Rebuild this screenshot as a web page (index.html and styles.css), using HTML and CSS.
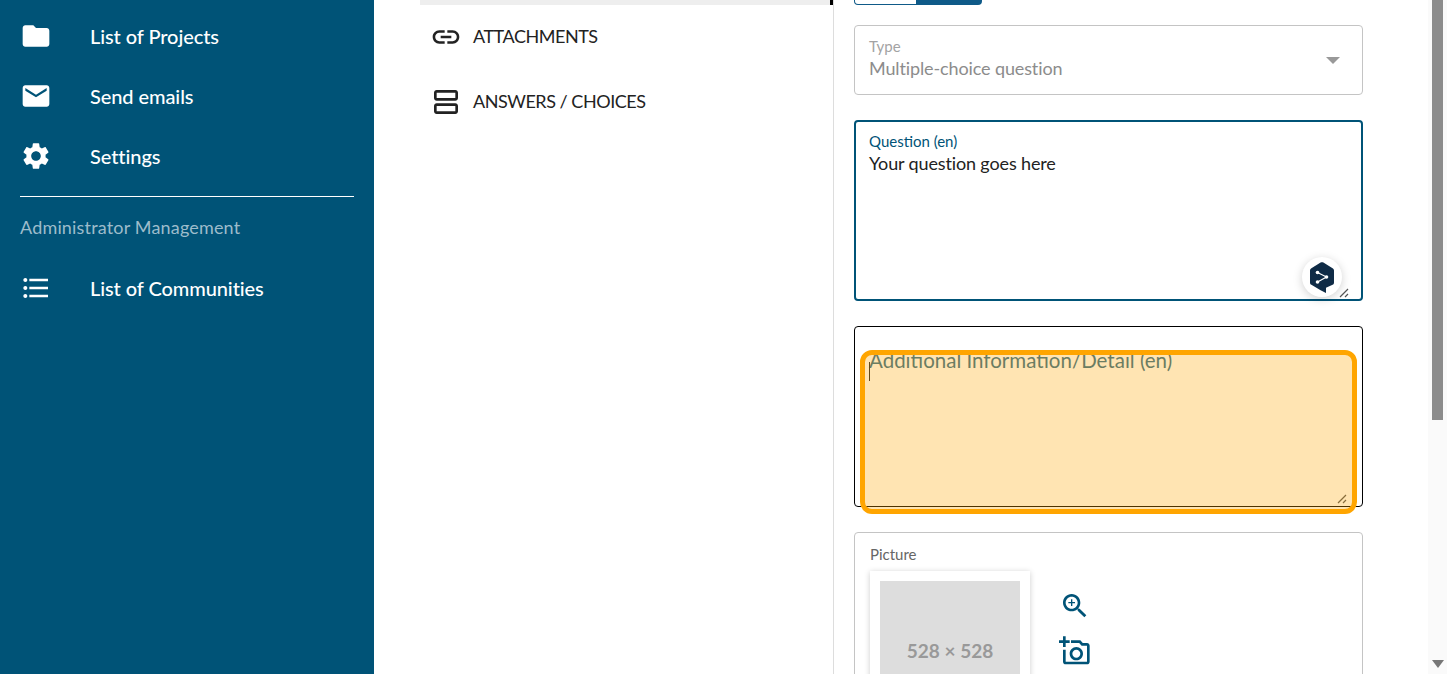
FILE: index.html
```html
<!DOCTYPE html>
<html>
<head>
  <title>Question editor</title>
  <meta charset="UTF-8">
  <meta name="viewport" content="width=device-width, initial-scale=1.0">
  <link rel="stylesheet" href="styles.css">
</head>
<body>
  <div class="shell">
    <nav class="sidebar">
      <a class="nav-item">
        <svg class="icon" viewBox="0 0 24 24"><path d="M10 4H4c-1.1 0-1.99.9-1.99 2L2 18c0 1.1.9 2 2 2h16c1.1 0 2-.9 2-2V8c0-1.1-.9-2-2-2h-8l-2-2z"/></svg>
        <span>List of Projects</span>
      </a>
      <a class="nav-item">
        <svg class="icon" viewBox="0 0 24 24"><path d="M20 4H4c-1.1 0-1.99.9-1.99 2L2 18c0 1.1.9 2 2 2h16c1.1 0 2-.9 2-2V6c0-1.1-.9-2-2-2zm0 4l-8 5-8-5V6l8 5 8-5v2z"/></svg>
        <span>Send emails</span>
      </a>
      <a class="nav-item">
        <svg class="icon" viewBox="0 0 24 24"><path d="M19.14 12.94c.04-.3.06-.61.06-.94 0-.32-.02-.64-.07-.94l2.03-1.58c.18-.14.23-.41.12-.61l-1.92-3.32c-.12-.22-.37-.29-.59-.22l-2.39.96c-.5-.38-1.03-.7-1.62-.94l-.36-2.54c-.04-.24-.24-.41-.48-.41h-3.84c-.24 0-.43.17-.47.41l-.36 2.54c-.59.24-1.13.57-1.62.94l-2.39-.96c-.22-.08-.47 0-.59.22L2.74 8.87c-.12.21-.08.47.12.61l2.03 1.58c-.05.3-.09.63-.09.94s.02.64.07.94l-2.03 1.58c-.18.14-.23.41-.12.61l1.92 3.32c.12.22.37.29.59.22l2.39-.96c.5.38 1.03.7 1.62.94l.36 2.54c.05.24.24.41.48.41h3.84c.24 0 .44-.17.47-.41l.36-2.54c.59-.24 1.13-.56 1.62-.94l2.39.96c.22.08.47 0 .59-.22l1.92-3.32c.12-.22.07-.47-.12-.61l-2.01-1.58zM12 15.6c-1.98 0-3.6-1.62-3.6-3.6s1.62-3.6 3.6-3.6 3.6 1.62 3.6 3.6-1.62 3.6-3.6 3.6z"/></svg>
        <span>Settings</span>
      </a>
      <hr class="nav-divider">
      <div class="nav-heading">Administrator Management</div>
      <a class="nav-item">
        <svg class="icon" viewBox="0 0 24 24"><path d="M4 10.5c-.83 0-1.5.67-1.5 1.5s.67 1.5 1.5 1.5 1.5-.67 1.5-1.5-.67-1.5-1.5-1.5zm0-6c-.83 0-1.5.67-1.5 1.5S3.17 7.5 4 7.5 5.5 6.83 5.5 6 4.83 4.5 4 4.5zm0 12c-.83 0-1.5.68-1.5 1.5s.68 1.5 1.5 1.5 1.5-.68 1.5-1.5-.67-1.5-1.5-1.5zM7 19h14v-2H7v2zm0-6h14v-2H7v2zm0-8v2h14V5H7z"/></svg>
        <span>List of Communities</span>
      </a>
    </nav>

    <section class="tabs">
      <div class="tab-active"></div>
      <a class="tab">
        <svg class="icon" viewBox="0 0 24 24"><path d="M3.9 12c0-1.71 1.39-3.1 3.1-3.1h4V7H7c-2.76 0-5 2.24-5 5s2.24 5 5 5h4v-1.9H7c-1.71 0-3.1-1.39-3.1-3.1zM8 13h8v-2H8v2zm9-6h-4v1.9h4c1.71 0 3.1 1.39 3.1 3.1s-1.39 3.1-3.1 3.1h-4V17h4c2.76 0 5-2.24 5-5s-2.24-5-5-5z"/></svg>
        <span>ATTACHMENTS</span>
      </a>
      <a class="tab">
        <svg class="icon" viewBox="0 0 24 24"><path d="M19 13H5c-1.1 0-2 .9-2 2v4c0 1.1.9 2 2 2h14c1.1 0 2-.9 2-2v-4c0-1.1-.9-2-2-2zm0 6H5v-4h14v4zM19 3H5c-1.1 0-2 .9-2 2v4c0 1.1.9 2 2 2h14c1.1 0 2-.9 2-2V5c0-1.1-.9-2-2-2zm0 6H5V5h14v4z"/></svg>
        <span>ANSWERS / CHOICES</span>
      </a>
    </section>

    <main class="editor">
      <div class="toggle">
        <div class="toggle-off"></div>
        <div class="toggle-on"></div>
      </div>

      <div class="field field-select">
        <div class="select-text">
          <label class="field-label">Type</label>
          <div class="field-value">Multiple-choice question</div>
        </div>
        <div class="select-arrow"></div>
      </div>

      <div class="field field-focus">
        <label class="field-label">Question (en)</label>
        <div class="field-text">Your question goes here</div>
        <div class="deepl">
          <svg viewBox="0 0 24 31" width="24" height="31">
            <path class="deepl-hex" d="M10.6.6 1.4 6.2C.5 6.7 0 7.6 0 8.6v11.8c0 1 .5 1.9 1.4 2.4l9.2 5.4 5.4 2.8v-5.2l6.6-3c.9-.5 1.4-1.4 1.4-2.4V8.6c0-1-.5-1.9-1.4-2.4L13.4.6c-.9-.5-1.9-.5-2.8 0z"/>
            <path class="deepl-line" d="M7.5 10.5 16.5 15 7.5 20"/>
            <circle class="deepl-dot" cx="7.5" cy="10.5" r="1.8"/>
            <circle class="deepl-dot" cx="16.5" cy="15" r="1.8"/>
            <circle class="deepl-dot" cx="7.5" cy="20" r="1.8"/>
          </svg>
        </div>
        <svg class="resizer resizer-focus" viewBox="0 0 10 10"><path d="M1 9 9 1M6 9 9 6"/></svg>
      </div>

      <div class="field field-detail">
        <div class="detail-placeholder">Additional Information/Detail (en)</div>
        <div class="caret"></div>
        <svg class="resizer resizer-detail" viewBox="0 0 10 10"><path d="M1 9 9 1M6 9 9 6"/></svg>
        <div class="highlight"></div>
      </div>

      <div class="field field-picture">
        <label class="picture-label">Picture</label>
        <div class="picture-row">
          <div class="picture-card">
            <div class="picture-empty">528 × 528</div>
          </div>
          <div class="picture-actions">
            <svg class="icon" viewBox="0 0 24 24"><path d="M15.5 14h-.79l-.28-.27C15.41 12.59 16 11.11 16 9.5 16 5.91 13.09 3 9.5 3S3 5.91 3 9.5 5.91 16 9.5 16c1.61 0 3.09-.59 4.23-1.57l.27.28v.79l5 4.99L20.49 19l-4.99-5zm-6 0C7.01 14 5 11.99 5 9.5S7.01 5 9.5 5 14 7.01 14 9.5 11.99 14 9.5 14z"/><path d="M12 10h-2v2H9v-2H7V9h2V7h1v2h2v1z"/></svg>
            <svg class="icon" viewBox="0 0 24 24"><path d="M21 6h-3.17L16 4H9v2h6.12l1.83 2H21v12H5v-9H3v9c0 1.1.9 2 2 2h16c1.1 0 2-.9 2-2V8c0-1.1-.9-2-2-2zM8 14c0 2.76 2.24 5 5 5s5-2.24 5-5-2.24-5-5-5-5 2.24-5 5zm5-3c1.65 0 3 1.35 3 3s-1.35 3-3 3-3-1.35-3-3 1.35-3 3-3zM5 6h3V4H5V1H3v3H0v2h3v3h2z"/></svg>
          </div>
        </div>
      </div>
    </main>

    <div class="scrollbar">
      <div class="scroll-thumb"></div>
      <div class="scroll-down"></div>
    </div>
  </div>
</body>
</html>
```

FILE: styles.css
```css
/* Reset styles */
* {
  margin: 0;
  padding: 0;
  box-sizing: border-box;
}

/* Base styles */
body {
  font-family: 'Lato', sans-serif;
  background-color: #fff;
  color: #222;
  overflow: hidden;
}

.icon {
  width: 32px;
  height: 32px;
  flex-shrink: 0;
  fill: currentColor;
}

/* Layout styles */
.shell {
  display: flex;
  height: 100vh;
  overflow: hidden;
}

/* Sidebar */
.sidebar {
  width: 374px;
  flex-shrink: 0;
  padding: 6px 20px 0;
  background-color: #005377;
  color: #fff;
}

.nav-item {
  display: flex;
  align-items: center;
  gap: 38.5px;
  height: 60px;
  margin-left: -0.5px;
  font-size: 20px;
  font-weight: 500;
  letter-spacing: -0.08px;
}

.nav-divider {
  height: 1px;
  margin-top: 10px;
  border: none;
  background-color: #fff;
}

.nav-heading {
  margin-top: 19px;
  margin-bottom: 20px;
  font-size: 18px;
  line-height: 22px;
  letter-spacing: 0.17px;
  color: #9dbccb;
}

/* Middle column */
.tabs {
  width: 460px;
  flex-shrink: 0;
  padding-left: 46px;
  border-right: 1px solid #ddd;
}

.tab-active {
  height: 5px;
  background-color: #eee;
  border-right: 3px solid #000;
}

.tab {
  display: flex;
  align-items: center;
  gap: 11px;
  height: 65px;
  padding-left: 10px;
  padding-bottom: 2px;
  font-size: 18px;
  letter-spacing: -0.47px;
  color: #222;
}

.tab span {
  margin-bottom: 2px;
}

/* Form column */
.editor {
  width: 509px;
  flex-shrink: 0;
  margin-left: 20px;
}

.toggle {
  display: flex;
  height: 5px;
  margin-bottom: 20px;
}

.toggle-off {
  width: 63px;
  border: 1px solid #0f5a88;
  border-top: none;
  border-radius: 0 0 0 4px;
}

.toggle-on {
  width: 65px;
  background-color: #0f5a88;
  border-radius: 0 0 4px 0;
}

.field {
  position: relative;
  margin-bottom: 25px;
  border: 1px solid #c4c4c4;
  border-radius: 4px;
}

.field-label {
  display: block;
  font-size: 15px;
  line-height: 17px;
}

.field-select {
  display: flex;
  justify-content: space-between;
  align-items: center;
  height: 70px;
  padding: 0 22px 0 14px;
  color: #8c8c8c;
}

.select-text {
  padding-bottom: 3px;
}

.field-select .field-label {
  color: #a3a3a3;
}

.field-value {
  margin-top: 2px;
  font-size: 18px;
  line-height: 22px;
  letter-spacing: -0.12px;
}

.select-arrow {
  width: 0;
  height: 0;
  margin-top: 1px;
  border-left: 7px solid transparent;
  border-right: 7px solid transparent;
  border-top: 7px solid #999;
}

.field-focus {
  height: 181px;
  padding: 11px 13px;
  border: 2px solid #005377;
}

.field-focus .field-label {
  color: #005377;
}

.field-text {
  margin-top: 2px;
  font-size: 18px;
  line-height: 22px;
  letter-spacing: -0.14px;
}

.deepl {
  position: absolute;
  right: 19px;
  bottom: 2px;
  display: flex;
  align-items: center;
  justify-content: center;
  width: 40px;
  height: 40px;
  border-radius: 50%;
  background-color: #fff;
  box-shadow: 0 2px 10px rgba(0, 0, 0, 0.18);
}

.deepl-hex {
  fill: #0f2b46;
}

.deepl-line {
  fill: none;
  stroke: #fff;
  stroke-width: 1.2;
}

.deepl-dot {
  fill: #fff;
}

.resizer {
  position: absolute;
  width: 10px;
  height: 10px;
  fill: none;
  stroke: #555;
  stroke-width: 1.2;
}

.resizer-focus {
  right: 12px;
  bottom: 1px;
}

.resizer-detail {
  right: 15px;
  bottom: 2px;
}

.field-detail {
  height: 181px;
  border-color: #000;
}

.detail-placeholder {
  padding: 21px 14px 0;
  font-size: 20.5px;
  line-height: 24px;
  color: #2c6c8d;
}

.caret {
  position: absolute;
  left: 14px;
  top: 35px;
  width: 1px;
  height: 19px;
  background-color: #222;
}

/* Tour highlight over the detail field */
.highlight {
  position: absolute;
  left: 5px;
  top: 23px;
  width: 497px;
  height: 164px;
  border: 5px solid #ffa500;
  border-radius: 12px;
  background-color: rgba(255, 165, 0, 0.3);
}

.field-picture {
  height: 220px;
  padding: 13px 15px;
}

.picture-label {
  display: block;
  font-size: 15px;
  line-height: 17px;
  color: #666;
}

.picture-row {
  display: flex;
  margin-top: 8px;
}

.picture-card {
  width: 160px;
  height: 160px;
  padding: 10px;
  background-color: #fff;
  box-shadow: 0 1px 6px rgba(0, 0, 0, 0.2);
}

.picture-empty {
  display: flex;
  align-items: center;
  justify-content: center;
  height: 138px;
  background-color: #ddd;
  font-size: 19px;
  font-weight: 700;
  color: #999;
}

.picture-actions {
  display: flex;
  flex-direction: column;
  gap: 13px;
  margin-top: 19px;
  margin-left: 29px;
  color: #005377;
}

/* Page scrollbar */
.scrollbar {
  display: flex;
  flex-direction: column;
  justify-content: space-between;
  align-items: center;
  width: 19px;
  margin-left: auto;
  background-color: #fafafa;
}

.scroll-thumb {
  width: 11px;
  height: 420px;
  background-color: #8c8c8c;
}

.scroll-down {
  width: 0;
  height: 0;
  margin-bottom: 6px;
  border-left: 6px solid transparent;
  border-right: 6px solid transparent;
  border-top: 8px solid #777;
}
```
